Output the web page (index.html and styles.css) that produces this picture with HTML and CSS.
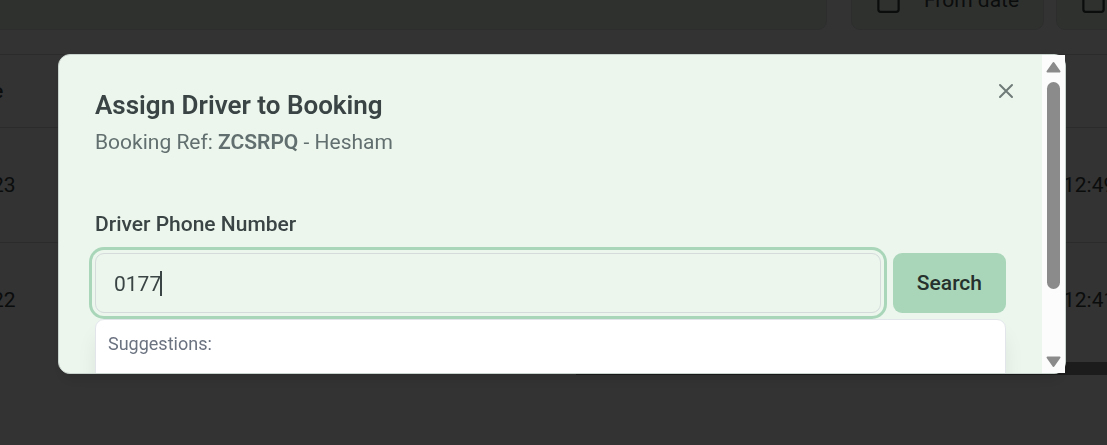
FILE: index.html
```html
<!DOCTYPE html>
<html lang="en">
<head>
<meta charset="utf-8">
<meta name="viewport" content="width=device-width, initial-scale=1">
<title>Assign Driver to Booking</title>
<link rel="stylesheet" href="styles.css">
</head>
<body>
<main class="page">
  <div class="filters">
    <div class="filter filter-search"></div>
    <div class="dates">
      <button class="filter filter-date" type="button">
        <svg class="icon" viewBox="0 0 24 24" aria-hidden="true"><path d="M8 2v4M16 2v4M3 10h18"/><rect x="3" y="4" width="18" height="18" rx="2"/></svg>
        From date
      </button>
      <button class="filter filter-date" type="button" aria-label="End of range">
        <svg class="icon" viewBox="0 0 24 24" aria-hidden="true"><path d="M8 2v4M16 2v4M3 10h18"/><rect x="3" y="4" width="18" height="18" rx="2"/></svg>
      </button>
    </div>
  </div>
  <table class="bookings">
    <thead><tr><th>e</th><th class="time"></th></tr></thead>
    <tbody>
      <tr><td>23</td><td class="time">12:49</td></tr>
      <tr><td>22</td><td class="time">12:41</td></tr>
    </tbody>
  </table>
  <div class="track"><div class="track-thumb"></div></div>
</main>

<div class="overlay">
  <section class="modal" role="dialog" aria-modal="true" aria-labelledby="title">
    <div class="content">
      <header class="header">
        <div>
          <h1 class="title" id="title">Assign Driver to Booking</h1>
          <p class="subtitle">Booking Ref: <strong>ZCSRPQ</strong> - Hesham</p>
        </div>
        <button class="close" type="button" aria-label="Close">
          <svg viewBox="0 0 24 24" aria-hidden="true"><path d="M18 6 6 18M6 6l12 12"/></svg>
        </button>
      </header>
      <form class="form">
        <label class="label" for="phone">Driver Phone Number</label>
        <div class="row">
          <div class="field">
            <input class="input" id="phone" type="tel" value="0177" autocomplete="off">
            <span class="caret"></span>
          </div>
          <button class="search" type="button">Search</button>
          <div class="suggestions">Suggestions:</div>
        </div>
      </form>
    </div>
    <div class="scrollbar" aria-hidden="true">
      <svg class="arrow" viewBox="0 0 15 12"><path d="M7.500 2 13.500 10.500H1.500Z"/></svg>
      <div class="rail"><div class="thumb"></div></div>
      <svg class="arrow" viewBox="0 0 15 12"><path d="M7.500 10 1.500 1.500H13.500Z"/></svg>
    </div>
  </section>
</div>
</body>
</html>
```

FILE: styles.css
```css
* {
  box-sizing: border-box;
}

body {
  margin: 0;
  height: 100vh;
  overflow: hidden;
  background: #fcfcfc;
  color: #3a4444;
  font-family: Roboto, "Liberation Sans", sans-serif;
  font-size: 21px;
  line-height: 30px;
}

button,
input {
  font: inherit;
  color: inherit;
}

/* Page behind the dialog, scrolled part of the way down */
.page {
  margin-top: -30px;
  overflow: hidden;
}

.filters {
  display: flex;
  gap: 24px;
  margin-bottom: 24px;
}

.filter {
  height: 60px;
  border: 1px solid #d9e2dc;
  border-radius: 9px;
  background: #ecf6ea;
}

.filter-search {
  flex: 1;
  margin-left: -12px;
}

.dates {
  display: flex;
  gap: 12px;
  margin-right: -142px;
}

.filter-date {
  display: flex;
  align-items: center;
  gap: 22px;
  width: 193px;
  padding: 0 23px;
  white-space: nowrap;
}

.icon {
  flex: none;
  width: 27px;
  height: 27px;
  fill: none;
  stroke: currentColor;
  stroke-width: 2;
}

.bookings {
  width: calc(100% + 8px);
  margin-left: -8px;
  border-collapse: collapse;
  border-top: 1px solid #d4d8d8;
  table-layout: fixed;
}

.bookings th,
.bookings td {
  height: 115px;
  padding: 0;
  border-bottom: 1px solid #d4d8d8;
  text-align: left;
  white-space: nowrap;
}

.bookings th {
  height: 73px;
  font-weight: 500;
}

.bookings tbody tr:last-child td {
  height: 119px;
  padding-bottom: 4px;
  border-bottom: 0;
}

.bookings .time {
  width: 44px;
}

.track {
  display: flex;
  justify-content: flex-end;
}

.track-thumb {
  width: 48%;
  height: 13px;
  background: #8b8b8b;
}

/* Dialog */
.overlay {
  position: fixed;
  inset: 0;
  display: flex;
  padding: 54px 41px 71px 58px;
  background: rgba(0, 0, 0, 0.8);
}

.modal {
  flex: 1;
  display: flex;
  min-width: 0;
  border: 1px solid #c9d3cd;
  border-radius: 12px;
  background: #ecf6ed;
  box-shadow: 0 10px 15px -3px rgba(0, 0, 0, 0.1), 0 4px 6px -4px rgba(0, 0, 0, 0.1);
}

.content {
  flex: 1;
  min-width: 0;
  padding: 32px 36px 0;
  overflow: hidden;
  border-radius: 11px 0 0 11px;
}

.header {
  display: flex;
  justify-content: space-between;
  align-items: flex-start;
}

.title {
  margin: 0 0 4px;
  font-size: 26px;
  font-weight: 600;
  line-height: 36px;
}

.subtitle {
  margin: 0;
  color: #626f6f;
}

.subtitle strong {
  font-weight: 600;
}

.close {
  display: flex;
  margin-top: -8px;
  padding: 0;
  border: 0;
  background: none;
  color: #6f7b78;
}

.close svg {
  width: 24px;
  height: 24px;
  margin-right: -12px;
  fill: none;
  stroke: currentColor;
  stroke-width: 2;
  stroke-linecap: round;
}

.form {
  margin-top: 52px;
}

.label {
  display: block;
  margin-bottom: 14px;
  font-weight: 500;
}

.row {
  position: relative;
  display: flex;
  gap: 12px;
}

.field {
  position: relative;
  flex: 1;
}

.input {
  display: block;
  width: 100%;
  height: 60px;
  padding: 1px 18px 0;
  border: 1px solid #d5dadb;
  border-radius: 9px;
  outline: 0;
  background: #ecf6ed;
  box-shadow: 0 0 0 3px #ecf6ed, 0 0 0 6px #a9d6b9;
}

.caret {
  position: absolute;
  top: 18px;
  left: 65px;
  width: 2px;
  height: 25px;
  background: #3a4444;
}

.search {
  height: 60px;
  padding: 0 24px;
  border: 0;
  border-radius: 9px;
  background: #a9d6b9;
  color: #26302d;
  font-weight: 500;
}

.suggestions {
  position: absolute;
  top: 66px;
  left: 0;
  right: 0;
  height: 160px;
  padding: 9px 12px;
  border: 1px solid #e2e6ea;
  border-radius: 9px;
  background: #fff;
  box-shadow: 0 15px 22px -4px rgba(0, 0, 0, 0.1);
  color: #6b7280;
  font-size: 18px;
}

.scrollbar {
  display: flex;
  flex: none;
  flex-direction: column;
  align-items: center;
  width: 23px;
  padding: 6px 0 5px;
  background: #fcfcfc;
}

.arrow {
  width: 15px;
  height: 12px;
  fill: #8b8b8b;
  stroke: #8b8b8b;
  stroke-width: 2;
  stroke-linejoin: round;
}

.rail {
  flex: 1;
  padding: 9px 0 15px;
}

.thumb {
  width: 13px;
  height: 80%;
  border-radius: 7px;
  background: #8b8b8b;
}
```
